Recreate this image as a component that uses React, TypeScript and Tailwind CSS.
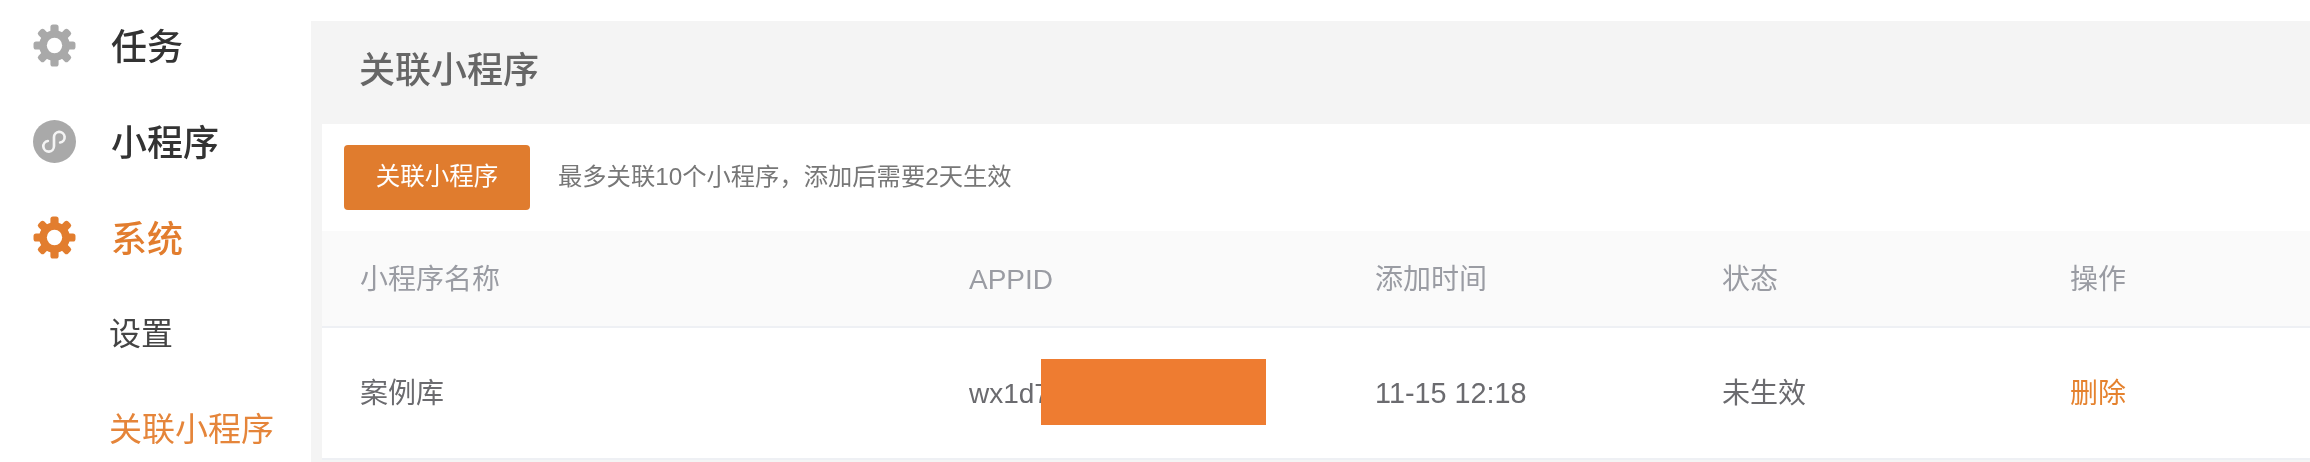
const font = "font-['Liberation_Sans','Noto_Sans_CJK_SC',sans-serif]";

const teeth = [0, 45, 90, 135, 180, 225, 270, 315];

function Gear({ className }: { className: string }) {
  return (
    <svg viewBox="0 0 42 42" className={`h-[43px] w-[43px] shrink-0 ${className}`}>
      <circle cx="21" cy="21" r="15" fill="currentColor" />
      {teeth.map((a) => (
        <rect key={a} x="17" y="0.5" width="8" height="9" rx="2.5" fill="currentColor" transform={`rotate(${a} 21 21)`} />
      ))}
      <circle cx="21" cy="21" r="7.5" fill="#fff" />
    </svg>
  );
}

function MiniLogo() {
  return (
    <svg viewBox="0 0 42 42" className="h-[43px] w-[43px] shrink-0">
      <circle cx="21" cy="21" r="21" fill="#a9a9a9" />
      <path d="M14.5 20.5A5.2 5.2 0 1 0 20.5 25.5V17A5.2 5.2 0 1 1 26.5 22" fill="none" stroke="#f4f4f4" strokeWidth="2.6" strokeLinecap="round" />
    </svg>
  );
}

function NavItem({ icon, label, active }: { icon: React.ReactNode; label: string; active?: boolean }) {
  return (
    <div className="flex h-[95.8px] items-center gap-[35px] pl-[33px]">
      {icon}
      <span className={`pt-[5px] text-[36px] font-medium ${active ? "text-[#e27d2e]" : "text-[#333]"}`}>{label}</span>
    </div>
  );
}

const cols = "grid grid-cols-[609px_406px_347px_348px_1fr] pl-[38px] items-center text-[28px]";

export default function App() {
  return (
    <div className={`flex h-[462px] w-[2310px] overflow-hidden bg-white blur-[0.6px] ${font}`}>
      <aside className="w-[311px] shrink-0 -mt-[2px]">
        <NavItem icon={<Gear className="text-[#a9a9a9]" />} label="任务" />
        <NavItem icon={<MiniLogo />} label="小程序" />
        <NavItem icon={<Gear className="text-[#e27d2e]" />} label="系统" active />
        <div className="flex h-[97px] items-center pl-[109px] text-[32px] text-[#444]">设置</div>
        <div className="flex h-[94px] items-center pl-[109px] text-[33px] text-[#e5853a]">关联小程序</div>
      </aside>
      <main className="mt-[21px] min-w-0 flex-1 bg-[#f4f4f4] pl-[11px]">
        <h1 className="flex h-[103px] items-center pb-[4px] pl-[37px] text-[36px] font-medium text-[#666]">关联小程序</h1>
        <div className="bg-white">
          <div className="flex h-[107px] items-center pl-[22px]">
            <button className="h-[65px] w-[186px] rounded-[4px] bg-[#e07c2e] text-[24.5px] text-white">关联小程序</button>
            <span className="ml-[28px] text-[24.3px] text-[#777]">最多关联10个小程序，添加后需要2天生效</span>
          </div>
          <div className={`${cols} h-[97px] border-b-2 border-[#eef0f4] bg-[#fafafa] pt-[2px] text-[#9a9ca3]`}>
            <div>小程序名称</div>
            <div>APPID</div>
            <div>添加时间</div>
            <div>状态</div>
            <div>操作</div>
          </div>
          <div className={`${cols} h-[132px] border-b-2 border-[#eef0f4] pt-[2px] text-[#6b6b6f]`}>
            <div>案例库</div>
            <div className="relative">
              wx1d7
              <span className="absolute left-[72px] top-1/2 h-[66px] w-[225px] -translate-y-[35px] bg-[#ee7c31]" />
            </div>
            <div className="text-[28.8px]">11-15 12:18</div>
            <div>未生效</div>
            <div className="text-[#e5822e]">删除</div>
          </div>
        </div>
      </main>
    </div>
  );
}
